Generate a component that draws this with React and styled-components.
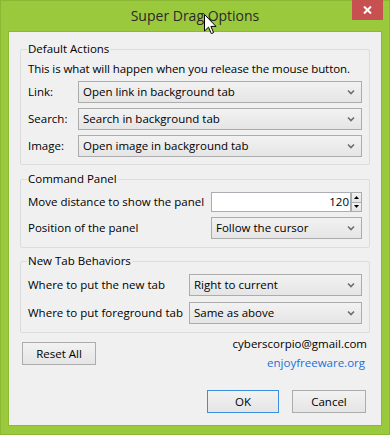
import React from "react";
import styled, { createGlobalStyle } from "styled-components";

const GlobalStyle = createGlobalStyle`
  body {
    margin: 0;
    font-family: "Open Sans", "Noto Sans", sans-serif;
    font-size: 11.5px;
    color: #000;
    background: #9bc93d;
  }
`;

const Window = styled.div`
  width: 390px;
  height: 435px;
  box-sizing: border-box;
  background: #9bc93d;
  border: 1px solid #8bb832;
  display: flex;
  flex-direction: column;
  position: relative;
`;

const TitleBar = styled.div`
  height: 30px;
  display: grid;
  grid-template-columns: 1fr auto 1fr;
  align-items: start;
`;

const Title = styled.div`
  grid-column: 2;
  margin-top: 5px;
  font-size: 14px;
  line-height: 20px;
  color: #2a2a2a;
`;

const CloseButton = styled.div`
  grid-column: 3;
  justify-self: end;
  width: 31px;
  height: 20px;
  margin-top: -1px;
  margin-right: 6px;
  background: #c75050;
  display: flex;
  align-items: center;
  justify-content: center;
`;

const Cursor = styled.svg`
  position: absolute;
  left: 203px;
  top: 13px;
`;

const Client = styled.div`
  flex: 1;
  margin: 0 7px 8px 7px;
  background: #f0f0f0;
  border: 1px solid #8db834;
  padding: 9px 11px 12px 11px;
  display: flex;
  flex-direction: column;
`;

const Group = styled.fieldset`
  margin: ${(p) => p.$top || 0}px 0 0 0;
  padding: ${(p) => p.$padTop || 4}px 7px ${(p) => p.$padBottom || 7}px 7px;
  border: 1px solid #dcdcdc;
  border-radius: 2px;
  min-inline-size: 0;
  display: flex;
  flex-direction: column;
  gap: ${(p) => p.$gap || 5}px;
`;

const Legend = styled.legend`
  padding: 0 1px;
  margin-left: -1px;
  line-height: 16px;
`;

const Note = styled.div`
  line-height: 16px;
  margin-bottom: -1px;
  white-space: nowrap;
  letter-spacing: -0.08px;
`;

const FieldRow = styled.div`
  display: grid;
  grid-template-columns: ${(p) => p.$labelWidth}px 1fr;
  align-items: center;
`;

const Label = styled.span`
  line-height: 16px;
  white-space: nowrap;
`;

const Combo = styled.div`
  height: 22px;
  box-sizing: border-box;
  border: 1px solid #acacac;
  background: linear-gradient(#f2f2f2, #e5e5e5);
  display: flex;
  align-items: center;
  justify-content: space-between;
  padding: 0 6px 0 4px;
`;

const ComboText = styled.span`
  line-height: 16px;
`;

const NumberWrap = styled.div`
  display: flex;
  height: 20px;
`;

const NumberBox = styled.div`
  flex: 1;
  box-sizing: border-box;
  border: 1px solid #abadb3;
  background: #fff;
  text-align: right;
  line-height: 18px;
  padding-right: 1px;
`;

const Spinner = styled.div`
  width: 11px;
  display: flex;
  flex-direction: column;
`;

const SpinButton = styled.div`
  flex: 1;
  box-sizing: border-box;
  border: 1px solid #acacac;
  margin-top: ${(p) => (p.$down ? "-1px" : 0)};
  background: linear-gradient(#f2f2f2, #e5e5e5);
  display: flex;
  align-items: center;
  justify-content: center;
`;

const Footer = styled.div`
  display: flex;
  justify-content: space-between;
  align-items: flex-start;
  margin-top: 3px;
  padding: 0 3px 0 2px;
`;

const Contact = styled.div`
  display: flex;
  flex-direction: column;
  align-items: flex-end;
  gap: 3px;
  line-height: 16px;
`;

const Link = styled.a`
  color: #1b6fd8;
  text-decoration: none;
  margin-right: 2px;
`;

const Button = styled.div`
  width: ${(p) => p.$width}px;
  height: 23px;
  box-sizing: border-box;
  border: 1px solid ${(p) => (p.$focused ? "#3d8ee0" : "#acacac")};
  background: linear-gradient(#f2f2f2, #e5e5e5);
  display: flex;
  align-items: center;
  justify-content: center;
  line-height: 16px;
  margin-top: ${(p) => p.$top || 0}px;
`;

const ButtonRow = styled.div`
  margin-top: auto;
  display: flex;
  justify-content: flex-end;
  gap: 13px;
  padding-right: 4px;
`;

const Chevron = () => (
  <svg width="8" height="6" viewBox="0 0 8 6">
    <path d="M1 1.5 L4 4.5 L7 1.5" fill="none" stroke="#6d6d6d" strokeWidth="1.6" />
  </svg>
);

function Select({ value }) {
  return (
    <Combo>
      <ComboText>{value}</ComboText>
      <Chevron />
    </Combo>
  );
}

export default function App() {
  return (
    <>
      <GlobalStyle />
      <Window>
        <TitleBar>
          <Title>Super Drag Options</Title>
          <CloseButton>
            <svg width="9" height="8" viewBox="0 0 9 8">
              <path d="M1 0.5 L8 7.5 M8 0.5 L1 7.5" stroke="#fff" strokeWidth="2" />
            </svg>
          </CloseButton>
        </TitleBar>
        <Client>
          <Group $padTop={4} $padBottom={7}>
            <Legend>Default Actions</Legend>
            <Note>This is what will happen when you release the mouse button.</Note>
            <FieldRow $labelWidth={50}>
              <Label>Link:</Label>
              <Select value="Open link in background tab" />
            </FieldRow>
            <FieldRow $labelWidth={50}>
              <Label>Search:</Label>
              <Select value="Search in background tab" />
            </FieldRow>
            <FieldRow $labelWidth={50}>
              <Label>Image:</Label>
              <Select value="Open image in background tab" />
            </FieldRow>
          </Group>

          <Group $top={6} $padTop={5} $padBottom={8}>
            <Legend>Command Panel</Legend>
            <FieldRow $labelWidth={183}>
              <Label>Move distance to show the panel</Label>
              <NumberWrap>
                <NumberBox>120</NumberBox>
                <Spinner>
                  <SpinButton>
                    <svg width="5" height="3" viewBox="0 0 5 3">
                      <path d="M0 3 L2.5 0 L5 3 Z" fill="#000" />
                    </svg>
                  </SpinButton>
                  <SpinButton $down>
                    <svg width="5" height="3" viewBox="0 0 5 3">
                      <path d="M0 0 L2.5 3 L5 0 Z" fill="#000" />
                    </svg>
                  </SpinButton>
                </Spinner>
              </NumberWrap>
            </FieldRow>
            <FieldRow $labelWidth={183}>
              <Label>Position of the panel</Label>
              <Select value="Follow the cursor" />
            </FieldRow>
          </Group>

          <Group $top={5} $padTop={5} $padBottom={8} $gap={6}>
            <Legend>New Tab Behaviors</Legend>
            <FieldRow $labelWidth={161}>
              <Label>Where to put the new tab</Label>
              <Select value="Right to current" />
            </FieldRow>
            <FieldRow $labelWidth={161}>
              <Label>Where to put foreground tab</Label>
              <Select value="Same as above" />
            </FieldRow>
          </Group>

          <Footer>
            <Button $width={74} $top={6}>Reset All</Button>
            <Contact>
              <span>cyberscorpio@gmail.com</span>
              <Link href="#">enjoyfreeware.org</Link>
            </Contact>
          </Footer>

          <ButtonRow>
            <Button $width={72} $focused>OK</Button>
            <Button $width={74}>Cancel</Button>
          </ButtonRow>
        </Client>
        <Cursor width="13" height="21" viewBox="0 0 13 21">
          <path
            d="M0.5 0.5 L0.5 17 L4.5 13.2 L7.3 19.6 L9.6 18.6 L6.9 12.4 L12 12.4 Z"
            fill="#fff"
            stroke="#000"
            strokeWidth="1"
            strokeLinejoin="miter"
          />
        </Cursor>
      </Window>
    </>
  );
}
